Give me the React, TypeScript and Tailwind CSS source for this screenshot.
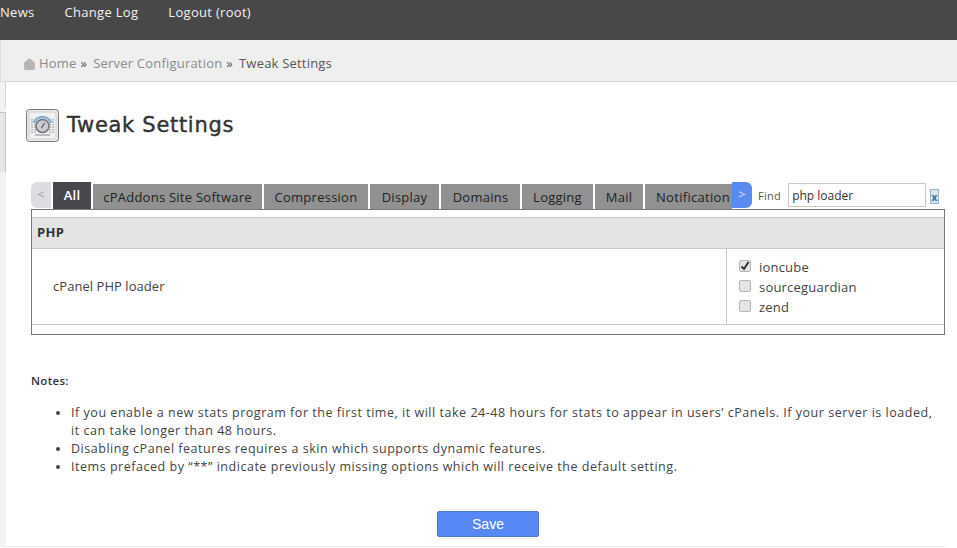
import { Home } from "lucide-react";

const tabs = [
  { label: "cPAddons Site Software", width: "w-[169px]" },
  { label: "Compression", width: "w-[104px]" },
  { label: "Display", width: "w-[69px]" },
  { label: "Domains", width: "w-[79px]" },
  { label: "Logging", width: "w-[71px]" },
  { label: "Mail", width: "w-[48px]" },
];

const options = [
  { label: "ioncube", checked: true },
  { label: "sourceguardian", checked: false },
  { label: "zend", checked: false },
];

const TweakIcon = () => (
  <svg width="33" height="33" viewBox="0 0 33 33" className="shrink-0">
    <rect x="0.5" y="0.5" width="32" height="32" rx="3" fill="#e9e9e9" stroke="#77797c" />
    <rect x="3" y="3" width="27" height="27" rx="2" fill="#f1f1f1" stroke="#cfcfcf" />
    <path d="M6 10v14M9 10v14M24 10v14M27 10v14" stroke="#b9b9b9" strokeWidth="2" strokeDasharray="1.5 1" />
    <path d="M8 14a9 9 0 0 1 17 0" fill="none" stroke="#8ab0cc" strokeWidth="2.5" />
    <circle cx="16.5" cy="17" r="6.5" fill="#c9cdd1" stroke="#72767a" strokeWidth="1.5" />
    <path d="M15.5 19l3-5" stroke="#55585c" strokeWidth="1.2" />
    <path d="M9 26h15" stroke="#a8a8a8" strokeWidth="1.5" />
  </svg>
);

export default function App() {
  return (
    <div className="h-[548px] w-[957px] overflow-hidden bg-white font-['Open_Sans',sans-serif] text-[13px] tracking-[0.3px] text-[#444]">
      <div className="flex h-10 items-start gap-[30px] bg-[#484848] pt-[3px] text-[#f2f2f2]">
        <span>News</span>
        <span>Change Log</span>
        <span>Logout (root)</span>
      </div>

      <div className="flex h-[42px] items-center border-b border-[#d8d8d8] bg-[#efefef] pt-[7px] tracking-[0.2px] text-[#8a8a8a]">
        <div className="mr-[23px] -mt-[7px] h-[40px] w-px bg-[#dcdcdc]" />
        <Home size={13} fill="#b5b5b5" stroke="#b5b5b5" className="-ml-px mr-[3px]" />
        <span>Home</span>
        <span className="ml-1 text-[#555]">»</span>
        <span className="ml-[6px]">Server Configuration</span>
        <span className="ml-1 text-[#555]">»</span>
        <span className="ml-[6px] text-[#555]">Tweak Settings</span>
      </div>

      <div className="flex">
        <div className="flex w-[6px] shrink-0 flex-col bg-[#f2f2f2]">
          <div className="h-[26px] border-r border-[#d5d5d5]" />
          <div className="mt-[4px] h-[60px] border-r border-t border-[#c4c4c4] bg-[#e6e6e6]" />
        </div>

        <div className="w-[939px] pl-[25px]">
          <div className="mt-[27px] -ml-[5px] flex items-center gap-[8px]">
            <TweakIcon />
            <h1 className="font-['DejaVu_Sans',sans-serif] text-[21px] font-normal tracking-[0.7px] text-[#333] [-webkit-text-stroke:0.4px_#333]">
              Tweak Settings
            </h1>
          </div>

          <div className="mt-[40px] flex h-[27px] items-end">
            <div className="mb-px flex h-[26px] w-5 items-center justify-center rounded-l-md bg-[#dcdde0] text-[#a5a5a5]">
              &lt;
            </div>
            <div className="ml-[2px] flex h-[27px] w-[38px] items-center justify-center bg-[#47474d] pt-px font-semibold text-white">
              All
            </div>
            <div className="ml-[2px] flex">
              {tabs.map((tab) => (
                <div
                  key={tab.label}
                  className={`mr-[2px] flex h-[25px] items-center justify-center bg-[#919191] pt-[2px] tracking-[0.25px] text-[#222] ${tab.width}`}
                >
                  {tab.label}
                </div>
              ))}
            </div>
            <div className="flex h-[25px] w-[87px] items-center bg-[#919191] pt-[2px] pl-[11px] whitespace-nowrap text-[#222]">
              Notification
            </div>
            <div className="mb-px flex h-[26px] w-5 items-center justify-center rounded-r-md bg-[#5b8af0] text-[#d5e0fa]">
              &gt;
            </div>
            <span className="mb-[5px] ml-[6px] text-[11px] text-[#555]">Find</span>
            <input
              readOnly
              value="php loader"
              className="mb-[2px] ml-[7px] h-6 w-[138px] border border-[#c8c8c8] px-[3px] text-[12px] tracking-normal text-[#333] outline-none"
            />
            <div className="mb-[5px] ml-1 flex h-[15px] w-[9px] items-center justify-center border border-[#9db4c4] bg-[#d8e4ec] text-[10px] leading-none font-bold text-[#2f6c9e]">
              x
            </div>
          </div>

          <div className="h-[126px] w-[914px] border border-[#77797c] pt-[7px]">
            <div className="flex h-8 items-center border-t border-b border-[#c9c9c4] bg-[#e4e4e4] pl-[5px] font-bold text-[#333]">
              PHP
            </div>
            <div className="flex h-[76px] border-b border-[#c8c8c8]">
              <div className="flex flex-1 items-center pl-[21px] tracking-[0.05px]">cPanel PHP loader</div>
              <div className="flex w-[218px] flex-col justify-center gap-[2px] border-l border-[#c8c8c8] pt-[2px] pl-3 tracking-[0.2px]">
                {options.map((option) => (
                  <div key={option.label} className="flex h-[18px] items-center gap-[8px]">
                    <span className="relative mb-[4px] h-3 w-3 rounded-[2px] border border-[#b5b5b5] bg-[#e6e6e6]">
                      {option.checked && (
                        <svg viewBox="0 0 12 12" className="absolute -top-px -left-px h-3 w-3">
                          <path d="M2.5 6.5l2.5 2.5 4.5-7" fill="none" stroke="#333" strokeWidth="2" />
                        </svg>
                      )}
                    </span>
                    <span>{option.label}</span>
                  </div>
                ))}
              </div>
            </div>
          </div>

          <p className="mt-[37px] text-[11.5px] font-semibold text-[#333]">Notes:</p>
          <ul className="mt-[15px] w-[908px] list-disc pl-10 text-[12.5px] leading-[18px] tracking-[0.53px]">
            <li>
              If you enable a new stats program for the first time, it will take 24-48 hours for stats to appear in users’ cPanels. If your server is loaded, it can take longer than 48 hours.
            </li>
            <li>Disabling cPanel features requires a skin which supports dynamic features.</li>
            <li>Items prefaced by “**” indicate previously missing options which will receive the default setting.</li>
          </ul>

          <div className="mt-[35px] ml-[406px]">
            <button className="h-[26px] w-[102px] rounded-[2px] border border-[#4a78d8] bg-[#5587f5] font-['Liberation_Sans',sans-serif] text-[14px] tracking-normal text-white">
              Save
            </button>
          </div>
          <div className="mt-[9px] -ml-[25px] border-t border-[#eeeeee]" />
        </div>
      </div>
    </div>
  );
}
